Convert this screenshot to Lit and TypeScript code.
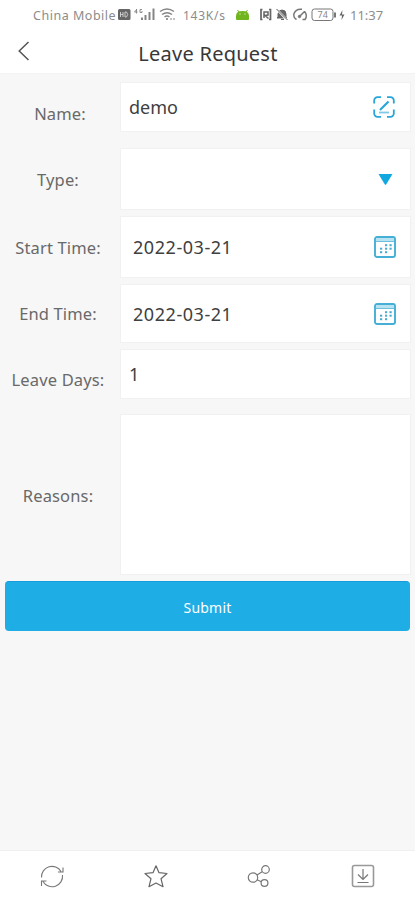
import { LitElement, html, css, svg } from "lit";
import { customElement } from "lit/decorators.js";

const editIcon = html`<svg width="22" height="22" viewBox="0 0 22 22" fill="none" stroke="#27a5d9" stroke-width="1.8">
  <path d="M1.200 7.500V4.500a3.300 3.300 0 0 1 3.300-3.300H8M14 1.200h3.500a3.300 3.300 0 0 1 3.300 3.300v3M20.800 13.500v4a3.300 3.300 0 0 1-3.300 3.300H14M8 20.800H4.500a3.300 3.300 0 0 1-3.300-3.300v-4" />
  <path d="M7 14 15.500 5.500" stroke-width="2.200" /><path d="M6 16.500h10" stroke-width="1.800" opacity=".6" />
</svg>`;

const dots = [[12, 9.200], [16.500, 9.200], [7, 12.700], [12, 12.700], [16.500, 12.700], [7, 16.200], [12, 16.200]];
const calendarIcon = html`<svg width="22" height="22" viewBox="0 0 22 22" fill="none">
  <rect x="1" y="1" width="20" height="20" rx="2" stroke="#45afd6" stroke-width="1.900" />
  <rect x="2" y="2" width="18" height="3" fill="#b9e3f1" />
  <path d="M2 5.500h18" stroke="#6cc0de" />
  ${dots.map(([x, y]) => svg`<rect x=${x - 1} y=${y - 1} width="2.200" height="2" fill="#4aabd0" />`)}
</svg>`;

const arrowIcon = html`<svg width="15" height="11" viewBox="0 0 15 11"><path d="M.5 0h14L8.300 10.200q-.8 1-1.600 0z" fill="#12a8df" /></svg>`;

@customElement("app-root")
class AppRoot extends LitElement {
  static styles = css`
    :host { display: flex; flex-direction: column; height: 900px; background: #f7f7f7; font-family: "Noto Sans", sans-serif; overflow: hidden; }
    svg { display: block; flex: none; }
    .status { height: 30px; background: #fff; display: flex; align-items: center; padding-left: 33px; color: #8c8c8c; font-size: 12.5px; white-space: nowrap; }
    .carrier { width: 84px; letter-spacing: 0.52px; }
    .rate { width: 52px; font-size: 12px; letter-spacing: 0.75px; }
    .clock { font-size: 13px; margin-left: -4px; }
    .header { height: 44px; background: #fff; border-bottom: 1px solid #f3f3f3; box-sizing: border-box; display: grid; grid-template-columns: 60px 1fr 59px; align-items: center; }
    .back { margin: -1px 0 0 18px; }
    .title { text-align: center; font-size: 20px; letter-spacing: 0.25px; color: #383838; white-space: nowrap; padding-top: 4px; }
    .form { padding: 9px 5px 0 0; }
    .row { display: grid; grid-template-columns: 121px 1fr; align-items: center; margin-bottom: 8px; }
    .row.input { margin-bottom: 6px; }
    .row.input.days { margin-bottom: 5px; }
    .row.last { margin-bottom: 7px; }
    .label { text-align: center; font-size: 16.500px; letter-spacing: 0.15px; color: #696969; white-space: nowrap; padding-right: 5px; }
    .name .label { padding-right: 1px; }
    .days .label { padding-bottom: 2px; }
    .last .label { padding-top: 2px; }
    .field { box-sizing: border-box; background: #fff; box-shadow: 0 0 0 1px #f1f1f1; height: 60px; display: flex; align-items: center; justify-content: space-between; padding: 0 14px 0 12px; font-size: 18px; color: #404040; }
    .start .field, .end .field { letter-spacing: 0.55px; }
    .input .field { height: 48px; margin-bottom: 12px; padding-left: 8px; padding-right: 15px; }
    .end .field { height: 57px; }
    .last .field { height: 159px; }
    .type .field { padding-right: 17px; }
    .submit { display: block; width: 405px; height: 50px; margin-left: 5px; border: 0; border-top: 1px solid #159ddb; border-radius: 4px; background: #1fade6; color: #fff; font: 14px "Noto Sans", sans-serif; letter-spacing: 0.2px; padding: 2px 0 0; }
    .tabs { margin-top: auto; height: 50px; box-sizing: border-box; border-top: 1px solid #f0f0f0; background: #fff; display: grid; grid-template-columns: repeat(4, 1fr); justify-items: center; align-items: center; }
  `;

  row(label: string, kind: string, value: unknown, icon: unknown) {
    return html`<div class="row ${kind}"><div class="label">${label}</div><div class="field"><span>${value}</span>${icon}</div></div>`;
  }

  render() {
    return html`
      <div class="status">
        <span class="carrier">China Mobile</span>
        <svg width="66" height="18" viewBox="117 6 66 18" fill="none" stroke="#858585">
          <rect x="118" y="9" width="12.500" height="11" rx="1.500" fill="#656565" stroke="none" />
          <path d="M120.500 12v5m0-2.500h2.500m0-2.500v5m2-5v5h1.500q2.500-2.500 0-5z" stroke="#ccc" />
          <path d="M137 9l-2.500 3h3m-1-3v4.500M142 9.500h-2v3h2v-1.500" stroke-width=".9" />
          <path d="M142 17.500v2.500m3.500-5v5m4-8v8m4-11.500V20" stroke-width="2" />
          <path d="M160 11.500q7-5 14 0M162 14.500q5-3.500 10 0M164.500 17q2.500-2 5 0" stroke-width="1.500" />
          <circle cx="167" cy="19" r="1" fill="#777" stroke="none" /><path d="M171 18v2m3-2v2" />
        </svg>
        <span class="rate">143K/s</span>
        <svg width="119" height="18" viewBox="235 6 119 18" fill="none" stroke="#777">
          <path d="M236 19v-3q0-5 6.500-5t6.500 5v3q0 1-1 1h-11q-1 0-1-1z" fill="#70b51d" stroke="none" />
          <path d="M239 12l-1.500-2m8.500 2 1.500-2" stroke="#70b51d" /><path d="M239.500 14h1m4 0h1" stroke="#fff" />
          <path d="M262.500 9.500H261v10h1.500M269 9.500h1.500v10H269" stroke="#666" stroke-width="1.700" /><path d="M264 18v-6h4v3l-3 .5 3.500 3" stroke="#666" stroke-width="1.500" />
          <path d="M278 17v-3q0-4 4-4t4 4v3l1 1h-10zM281 19.500h3" fill="#666" stroke="#666" /><path d="M277 9.500l10.500 11" stroke="#fff" stroke-width="2" /><path d="M276.500 9l11 11" stroke="#555" />
          <path d="M296.500 19.500q-3.500-2-2.500-6 2-5 8-4.200M304.500 11.500q3.500 4 .5 8h-2.500M299.500 16.500l5-5" stroke-width="1.500" /><circle cx="299.500" cy="16.500" r="1.200" fill="#777" />
          <rect x="312" y="9" width="21" height="11.500" rx="2.500" /><path d="M335 12.500v5" stroke-width="2" />
          <text x="317.500" y="18.300" font-size="9" font-family="Noto Sans" fill="#888" stroke="none">74</text>
          <path d="M342.500 10l-3 5.500h2.500L341.500 20l3-5.500H342z" fill="#666" stroke="none" />
        </svg>
        <span class="clock">11:37</span>
      </div>
      <div class="header">
        <svg class="back" width="12" height="20" viewBox="0 0 12 20" fill="none" stroke="#555" stroke-width="1.500"><path d="M10.500 1 1.200 10l9.300 9" /></svg>
        <div class="title">Leave Request</div>
      </div>
      <div class="form">
        ${this.row("Name:", "input name", "demo", editIcon)}
        ${this.row("Type:", "type", "", arrowIcon)}
        ${this.row("Start Time:", "start", "2022-03-21", calendarIcon)}
        ${this.row("End Time:", "end", "2022-03-21", calendarIcon)}
        ${this.row("Leave Days:", "input days", "1", "")}
        ${this.row("Reasons:", "last", "", "")}
        <button class="submit">Submit</button>
      </div>
      <div class="tabs">
        <svg width="24" height="24" viewBox="0 0 24 24" fill="none" stroke="#777" stroke-width="1.100"><path d="M1.500 13.500A10.500 10.500 0 0 1 21 7.500M22.500 11A10.500 10.500 0 0 1 3 17.500M23 3.500V8h-5M1.500 22v-5h5" /></svg>
        <svg width="24" height="24" viewBox="0 0 24 24" fill="none" stroke="#666" stroke-width="1.200" stroke-linejoin="round"><path d="M12 1.800 15 8.700l8 .8-6 5.200 2 8L12 19l-7 3.700 2-8L1 9.500l8-.8z" /></svg>
        <svg width="24" height="24" viewBox="0 0 24 24" fill="none" stroke="#777" stroke-width="1.200"><circle cx="6" cy="13.500" r="4.700" /><circle cx="18.500" cy="5.500" r="3.800" /><circle cx="17.500" cy="19" r="3.400" /><path d="m10 11 5.200-3.200M10 15.800l4.400 1.900" /></svg>
        <svg width="24" height="24" viewBox="0 0 24 24" fill="none" stroke="#777" stroke-width="1.200"><rect x="1.500" y="1.500" width="21" height="21" rx="2" stroke="#999" stroke-width="1.600" /><path d="M12 5v10.500M7 10.500l5 5 5-5M6.500 18.500h11" /></svg>
      </div>`;
  }
}
